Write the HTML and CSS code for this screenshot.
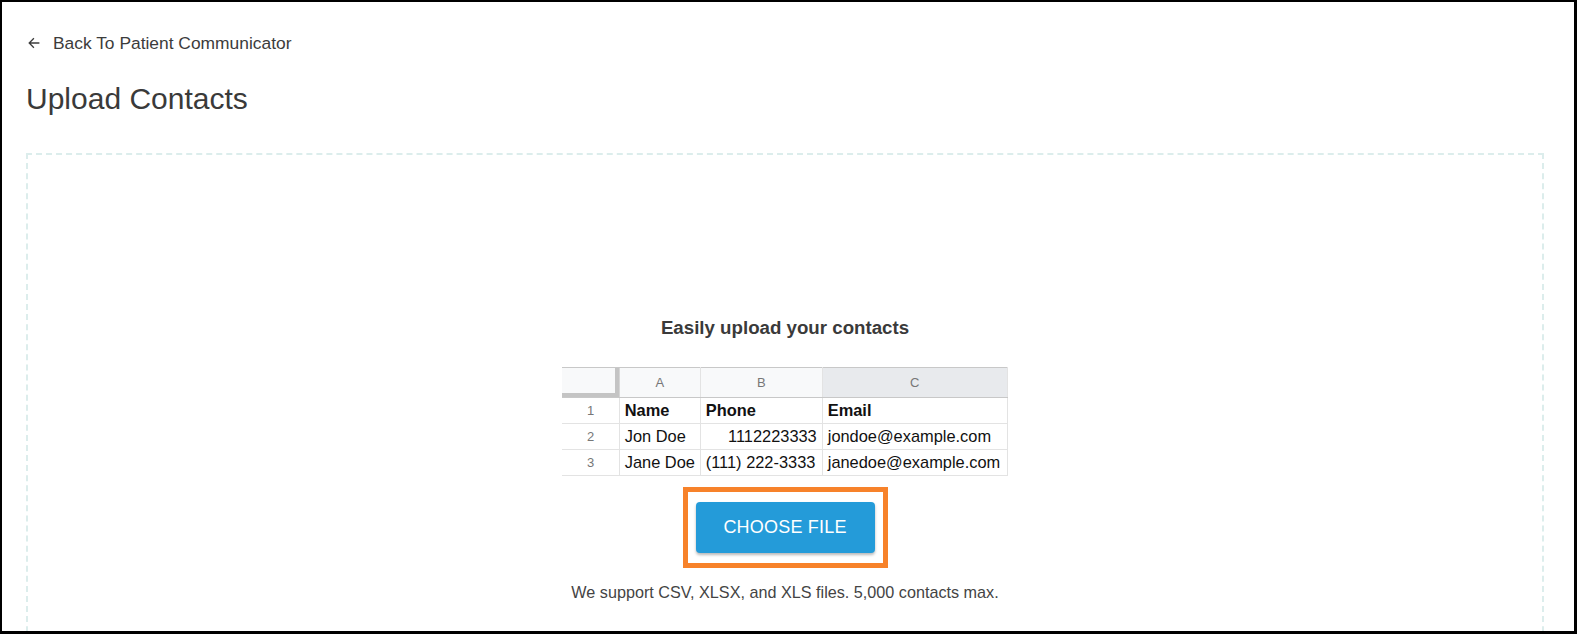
FILE: index.html
```html
<!DOCTYPE html>
<html lang="en">
<head>
<meta charset="utf-8">
<title>Upload Contacts</title>
<link rel="stylesheet" href="styles.css">
</head>
<body>
<div class="frame">
  <div class="page">
    <a class="back" href="#">
      <svg class="back-icon" width="12" height="12" viewBox="0 0 12 12" aria-hidden="true">
        <path d="M11.4 6H1.4M5.9 1.3L1.2 6l4.7 4.7" fill="none" stroke="#3c3c3c" stroke-width="1.3"/>
      </svg>
      <span>Back To Patient Communicator</span>
    </a>
    <h1 class="title">Upload Contacts</h1>
    <section class="dropzone">
      <h2 class="drop-title">Easily upload your contacts</h2>
      <table class="sheet">
        <colgroup>
          <col class="c-num"><col class="c-a"><col class="c-b"><col class="c-c">
        </colgroup>
        <thead>
          <tr class="hdr">
            <th class="corner"></th>
            <th>A</th>
            <th>B</th>
            <th class="sel">C</th>
          </tr>
        </thead>
        <tbody>
          <tr>
            <td class="num">1</td>
            <td class="bold">Name</td>
            <td class="bold">Phone</td>
            <td class="bold">Email</td>
          </tr>
          <tr>
            <td class="num">2</td>
            <td>Jon Doe</td>
            <td class="right">1112223333</td>
            <td>jondoe@example.com</td>
          </tr>
          <tr>
            <td class="num">3</td>
            <td>Jane Doe</td>
            <td>(111) 222-3333</td>
            <td>janedoe@example.com</td>
          </tr>
        </tbody>
      </table>
      <div class="highlight">
        <button class="choose" type="button">CHOOSE FILE</button>
      </div>
      <p class="support">We support CSV, XLSX, and XLS files. 5,000 contacts max.</p>
    </section>
  </div>
</div>
</body>
</html>
```

FILE: styles.css
```css
html, body {
  margin: 0;
  padding: 0;
  background: #fff;
}

body {
  font-family: "Liberation Sans", Arial, sans-serif;
  color: #3c3c3c;
}

.frame {
  box-sizing: border-box;
  width: 1577px;
  height: 634px;
  border-style: solid;
  border-color: #000;
  border-width: 2px 3px 3px 2px;
  overflow: hidden;
}

.page {
  padding: 31px 30px 0 24px;
}

.back {
  display: flex;
  align-items: center;
  gap: 13px;
  height: 20px;
  padding-left: 2px;
  color: #3c3c3c;
  text-decoration: none;
  font-size: 17.4px;
  line-height: 20px;
}

.back-icon {
  display: block;
  flex: none;
}

.title {
  margin: 30px 0 0 0;
  font-size: 30px;
  line-height: 32px;
  font-weight: normal;
  color: #3a3a3a;
}

.dropzone {
  margin-top: 38px;
  height: 600px;
  border: 2px dashed #dcedec;
  display: flex;
  flex-direction: column;
  align-items: center;
  padding-top: 162px;
  box-sizing: border-box;
}

.drop-title {
  margin: 0;
  font-size: 18.7px;
  line-height: 22px;
  font-weight: bold;
  color: #3a3a3a;
}

.sheet {
  margin-top: 28px;
  width: 445px;
  table-layout: fixed;
  border-collapse: collapse;
  font-size: 16.4px;
  color: #111;
}

.c-num { width: 57px; }
.c-a { width: 81px; }
.c-b { width: 122px; }
.c-c { width: 185px; }

.sheet th,
.sheet td {
  padding: 0 5px;
  border: 1px solid #e3e3e3;
  white-space: nowrap;
  overflow: hidden;
}

.sheet th:first-child,
.sheet td:first-child {
  border-left: none;
}

.hdr th {
  height: 29px;
  background: #f8f9fa;
  border-top: 1px solid #c8c8c8;
  border-bottom: 1px solid #c8c8c8;
  border-left-color: #d6d6d6;
  color: #777;
  font-weight: normal;
  font-size: 13px;
  text-align: center;
}

.hdr th.sel {
  background: #e8eaed;
}

.hdr th.corner {
  background: #f8f9fa;
  box-shadow: inset -4px -4px 0 #c4c4c4;
  border-right: none;
}

.sheet td {
  height: 25px;
  line-height: 25px;
}

.sheet td.num {
  text-align: center;
  color: #777;
  font-size: 13px;
}

.sheet td.bold {
  font-weight: bold;
}

.sheet td.right {
  text-align: right;
}

.highlight {
  margin-top: 11px;
  border: 5px solid #f7822a;
  padding: 10px 8px;
}

.choose {
  display: block;
  width: 179px;
  height: 51px;
  border: none;
  border-radius: 4px;
  background: #249bd9;
  color: #fff;
  font-family: "Liberation Sans", Arial, sans-serif;
  font-size: 18px;
  letter-spacing: 0.2px;
  box-shadow: 0 2px 3px rgba(0, 0, 0, 0.28);
  cursor: pointer;
}

.support {
  margin: 15px 0 0 0;
  font-size: 16.2px;
  line-height: 18px;
  color: #444;
}
```
